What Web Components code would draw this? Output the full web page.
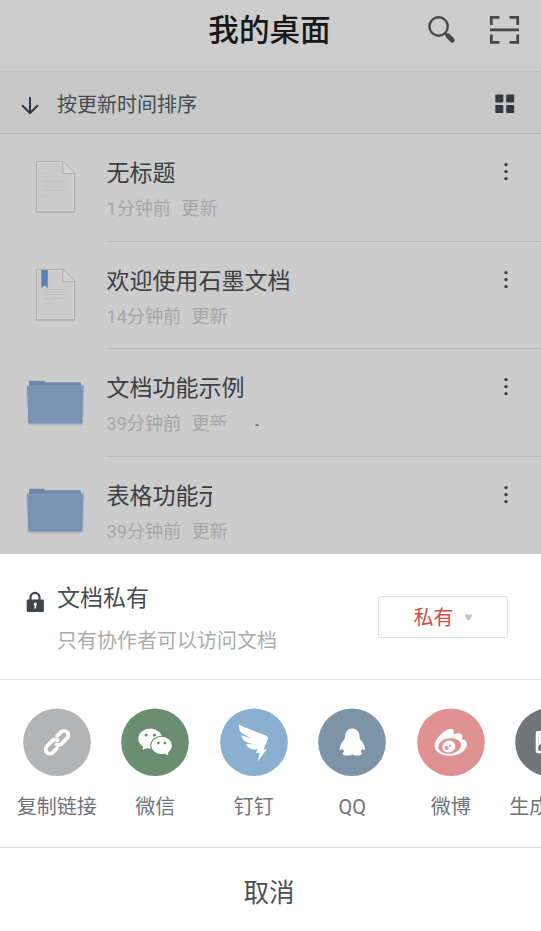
<!DOCTYPE html>
<html lang="zh-CN">
<head>
<meta charset="utf-8">
<title>我的桌面</title>
<style>
html,body{margin:0;height:100%;overflow:hidden}
body{font-family:Roboto,"Noto Sans CJK SC",sans-serif;background:#ccc;color:#34393e}
</style>
</head>
<body>
<desk-app></desk-app>
<script>
const define = (name, html) => customElements.define(name, class extends HTMLElement {
  connectedCallback() {
    if (this.shadowRoot) return;
    const root = this.attachShadow({mode: 'open'});
    const t = document.createElement('template');
    t.innerHTML = typeof html === 'function' ? html(this) : html;
    root.append(t.content.cloneNode(true));
  }
});

const paper = mark => `<svg width="44" height="56" viewBox="0 0 44 56">
<path d="M2 3.5H29L40.6 14.5V54.2H2Z" fill="#b9b9b9"/>
<path d="M2.4 2.4H29.2L40.6 13.8V52.6H2.4Z" fill="#d3d3d3" stroke="#acacac" stroke-width="1"/>
<path d="M4.2 4.2H28V15.2H39V51H4.2Z" fill="#cacaca"/>
<path d="M28.8 3V14.6H40.4" fill="#d3d3d3" stroke="#acacac" stroke-width="1"/>
<g stroke="#c0c0c0" stroke-width=".8"><path d="M9 14.5H18M9 18H15M9 22.5H34M9 25H32M9 27.5H33M9 31.5H34M9 36.5H18"/></g>
${mark ? '<path d="M7.3 3H13.8V20.7L10.6 18.6L7.3 20.7Z" fill="#5582bd"/>' : ''}</svg>`;
const folder = `<svg width="60" height="50" viewBox="0 0 60 50">
<defs><filter id="s" x="-10%" y="-10%" width="120%" height="125%"><feDropShadow dx="0" dy="1" stdDeviation=".8" flood-opacity=".22"/></filter></defs>
<path d="M4 4Q4 2.7 5.2 2.7H19L20.2 4.2H54.5Q56 4.2 56 5.5V10H4Z" fill="#6f89aa"/>
<g filter="url(#s)"><path d="M2 7.8H58.5L57.3 45.5H3.4Z" fill="#7a93b4"/></g><path d="M2 7.8H58.5V9.6H2Z" fill="#829bbb"/></svg>`;
const fileIcons = {doc: paper(false), marked: paper(true), folder};

define('top-bar', `<style>
:host{display:flex;background:#cdcdcd;border-bottom:1px solid #c3c3c3;box-sizing:border-box;height:72px;padding:0 21px 12px 19px;align-items:center;justify-content:space-between}
.side{width:94px;display:flex;justify-content:space-between;align-items:center}
h1{margin:0;font-size:30.6px;font-weight:500;line-height:40px;color:#171717;padding-top:3px}
svg{display:block}
</style><span class="side"></span><h1><slot></slot></h1>
<span class="side"><svg width="32" height="32" viewBox="0 0 32 32" fill="none" stroke="#484848"><circle cx="12.6" cy="12.5" r="9.2" stroke-width="2.4"/><path d="M19 19L22.5 22.3" stroke-width="2.5"/><path d="M22 21.8L26.3 26.2" stroke-width="4.8" stroke-linecap="round"/></svg>
<svg width="32" height="32" viewBox="0 0 32 32" fill="none" stroke="#484848" stroke-width="2.8"><path d="M3.3 11V3.4H11.5M21.5 3.4H29.7V11M3.3 20.5V28.3H11.5M21.5 28.3H29.7V20.5M2 15.8H31"/></svg></span>`);

define('sort-bar', `<style>
:host{display:flex;box-sizing:border-box;height:62px;background:#c8c8c8;border-bottom:1px solid #b6b6b6;align-items:center;padding:4px 26px 0 20px;font-size:20px;line-height:30px;color:#464a4e}
svg{display:block}.g{margin-left:auto;margin-top:-1px}span{margin-left:17px;padding-top:1px}
</style><svg width="20" height="20" viewBox="0 0 20 20" fill="none" stroke="#333a42" stroke-width="2"><path d="M10 2V18M2 10.2L10 18L18 10.2"/></svg><span><slot></slot></span>
<svg class="g" width="20" height="20" viewBox="0 0 20 20" fill="#343a3f"><rect x=".3" y=".5" width="8" height="8" rx=".8"/><rect x="11.2" y=".5" width="8" height="8" rx=".8"/><rect x=".3" y="11" width="8" height="8" rx=".8"/><rect x="11.2" y="11" width="8" height="8" rx=".8"/></svg>`);

define('file-row', el => { const isFolder = el.getAttribute('kind') === 'folder'; return `<style>
:host{display:flex;height:107.67px}
.icon{width:106px;flex:none;display:flex;justify-content:center;padding-top:${isFolder ? 29 : 25}px;box-sizing:border-box;padding-left:${isFolder ? 4 : 6}px}
.body{flex:1;display:flex;justify-content:space-between;border-bottom:1px solid #bababa;box-sizing:border-box;padding:23px 29px 0 .5px}
.name{font-size:23px;line-height:34px;white-space:nowrap;color:#3c4045}
.time{position:relative;font-size:18.1px;word-spacing:.7px;line-height:26px;margin-top:5px;color:#a6a6a6;white-space:pre}
:host([cut-name]) .name{width:105.5px;overflow:hidden}
.patch{position:absolute;left:103.8px;top:14.8px;width:60px;height:16px;background:#ccc}
.patch::after{content:"";position:absolute;left:45px;top:-2px;width:3.5px;height:1.5px;border-radius:2px 2px 0 0;background:#8b7b76}
svg{display:block}.dots{margin-top:5px}
</style><div class="icon">${fileIcons[el.getAttribute('kind')]}</div>
<div class="body"><div><div class="name"><slot></slot></div><div class="time"><slot name="time"></slot>${el.hasAttribute('cut-time') ? '<i class="patch"></i>' : ''}</div></div>
<svg class="dots" width="12" height="20" viewBox="0 0 12 20" fill="#393939"><circle cx="6" cy="2.6" r="1.65"/><circle cx="6" cy="9.6" r="1.65"/><circle cx="6" cy="16.6" r="1.65"/></svg></div>`; });

define('access-panel', `<style>
:host{display:flex;box-sizing:border-box;height:126px;border-bottom:1px solid #e4e4e4;padding:0 33px 0 25px}
.lock{margin-top:37px;flex:none}
.txt{margin:28px 0 0 12px;flex:1}
.t{font-size:23px;line-height:34px;color:#474c51}.d{font-size:20px;line-height:30px;margin-top:10px;color:#acacac;white-space:nowrap}
button{all:unset;box-sizing:border-box;display:flex;align-items:center;justify-content:center;gap:10px;width:130px;height:42px;margin-top:42px;border:1px solid #e0e0e0;border-radius:2px;font-size:20px;line-height:30px;color:#d04a4b;background:#fff;padding-top:2px}
svg{display:block}button svg{margin-top:-2px}
</style><svg class="lock" width="20" height="22" viewBox="0 0 20 22"><path d="M5.5 10V6.5A4.5 4.7 0 0 1 14.5 6.5V10" fill="none" stroke="#40464c" stroke-width="2.2"/><rect x="1.7" y="8.5" width="17.2" height="12.6" rx="1.3" fill="#40464c"/><path d="M10.2 11.6a1.7 1.7 0 0 1 .9 3.1V17.5H9.5V14.7A1.7 1.7 0 0 1 10.2 11.6Z" fill="#fff"/></svg>
<div class="txt"><div class="t"><slot name="title"></slot></div><div class="d"><slot name="desc"></slot></div></div>
<button><slot name="mode"></slot><svg width="9" height="7" viewBox="0 0 9 7"><path d="M.4 .5H8.6L5.4 6.2H3.6Z" fill="#c2c3c6"/></svg></button>`);

const hook = 'M4.6 -4.3H10a4.3 4.3 0 0 1 0 8.6H2.2A4.3 4.3 0 0 1 -1.9 1.2';
const glyphs = {
 link: ['#b3b4b6', `<g transform="translate(34 34.2) rotate(-45)" fill="none" stroke="#fff" stroke-width="3.8" stroke-linecap="round"><path d="${hook}"/><path transform="rotate(180)" d="${hook}"/></g>`],
 wechat: ['#6b8d70', `<g fill="#fff"><ellipse cx="29.2" cy="30.6" rx="11.9" ry="10.1"/><path d="M22.5 37L21.5 41.8L27.5 39.5Z"/></g><ellipse cx="40.6" cy="37.4" rx="11.3" ry="9.7" fill="#6b8d70"/><g fill="#fff"><ellipse cx="40.6" cy="37.4" rx="10.3" ry="8.7"/><path d="M47.5 42L47 47.2L42 45Z"/></g><g fill="#6b8d70"><circle cx="25.1" cy="27" r="1.6"/><circle cx="33.4" cy="27" r="1.6"/><circle cx="37.3" cy="35" r="1.4"/><circle cx="43.8" cy="35" r="1.4"/></g>`],
 ding: ['#8aafcf', `<path fill="#fff" d="M19 16.3Q24 20 31 21.8L46 27.5Q48.6 28.8 47.6 31.7L43.6 41.3H46.7L37.8 53.4L39.7 45H36L37.6 40.7Q32 42.8 28.3 39.5Q26.7 38 26 35.9L33 36.2Q28 35.4 24.4 32.9Q22 30.5 21.2 27.2L32 30.6Q25 27.5 21 24.6Q18.5 21.5 19 16.3Z"/>`],
 qq: ['#7d93a7', `<path fill="#fff" d="M34.3 20.5C29.5 20.5 27 24.3 27.1 29C27.1 31.4 25 32.8 23.6 35C21.6 38.5 21.3 41 22 42.1C22.7 42.8 24 41 24.6 40.4C24.8 41.6 25.4 42.8 26.4 43.6C24 44.6 24 47.4 27.5 47.4H32Q33.5 47.2 34.3 46.3Q35.3 47.2 37 47.4H41.2C44.8 47.4 44.8 44.6 42.4 43.6C43.3 42.8 43.8 41.6 44.1 40.4C44.7 41 46 42.8 46.7 42.1C47.4 41 47 38.5 45.1 35C43.7 32.8 41.5 31.4 41.5 29C41.7 24.3 39 20.5 34.3 20.5Z"/>`],
 weibo: ['#e09292', `<path fill="#fff" d="M17.6 38C17.6 31 27 21.5 33.7 20.7C37 20.5 37.4 24 36.2 26.6C40.5 24.6 45.5 24.4 45.3 29Q45.3 30 44.8 31C48 31.8 49.8 33.5 49.9 36C50 42.5 42 47.7 33.3 47.7C24 47.7 17.6 43.5 17.6 38Z"/><ellipse cx="32.7" cy="38" rx="11.5" ry="7.7" transform="rotate(-7 32.7 38)" fill="#e09292"/><ellipse cx="31.8" cy="38.5" rx="6.6" ry="5.9" transform="rotate(-20 31.8 38.5)" fill="#fff"/><circle cx="29.6" cy="40" r="2" fill="#e09292"/><circle cx="33" cy="37.8" r="1" fill="#e09292"/>`],
 image: ['#717578', `<rect x="22" y="24.2" width="24" height="19.8" rx="1" fill="none" stroke="#fff" stroke-width="2.6"/><path fill="#fff" d="M23.3 38.5V25.5H45V40L38 33L33 37L28.2 32.5Z"/>`]
};
define('share-item', el => { const [c, g] = glyphs[el.getAttribute('icon')]; return `<style>
:host{display:flex;flex-direction:column;align-items:center;width:98.5px;flex:none}
svg{display:block;width:68px;height:68px}span{font-size:20px;line-height:30px;margin-top:15.6px;color:#6f7377;white-space:nowrap}
</style><svg viewBox="0 0 68 68"><circle cx="34" cy="34.2" r="33.8" fill="${c}"/>${g}</svg><span><slot></slot></span>`; });

define('share-strip', `<style>:host{display:flex;box-sizing:border-box;height:168px;overflow:hidden;border-bottom:1px solid #dcdcdc;padding:28.4px 0 0 7.5px}</style><slot></slot>`);
define('cancel-bar', `<style>:host{display:flex;flex:1;align-items:center;justify-content:center;font-size:25.6px;line-height:38px;padding:6px 3px 0 0;color:#4b5055}</style><slot></slot>`);
define('action-sheet', `<style>:host{display:flex;flex-direction:column;height:377px;flex:none;background:#fff}</style><slot></slot>`);
define('file-list', `<style>:host{display:block;flex:1;min-height:0;overflow:hidden;background:#ccc}</style><slot></slot>`);

define('desk-app', `<style>:host{display:flex;flex-direction:column;width:541px;height:931px;overflow:hidden}</style>
<top-bar>我的桌面</top-bar>
<sort-bar>按更新时间排序</sort-bar>
<file-list>
<file-row kind="doc">无标题<span slot="time">1分钟前&nbsp; 更新</span></file-row>
<file-row kind="marked">欢迎使用石墨文档<span slot="time">14分钟前&nbsp; 更新</span></file-row>
<file-row kind="folder" cut-time>文档功能示例<span slot="time">39分钟前&nbsp; 更新</span></file-row>
<file-row kind="folder" cut-name>表格功能示<span slot="time">39分钟前&nbsp; 更新</span></file-row>
</file-list>
<action-sheet>
<access-panel><span slot="title">文档私有</span><span slot="desc">只有协作者可以访问文档</span><span slot="mode">私有</span></access-panel>
<share-strip>
<share-item icon="link">复制链接</share-item><share-item icon="wechat">微信</share-item><share-item icon="ding">钉钉</share-item><share-item icon="qq">QQ</share-item><share-item icon="weibo">微博</share-item><share-item icon="image">生成图片</share-item>
</share-strip>
<cancel-bar>取消</cancel-bar>
</action-sheet>`);
</script>
</body>
</html>
